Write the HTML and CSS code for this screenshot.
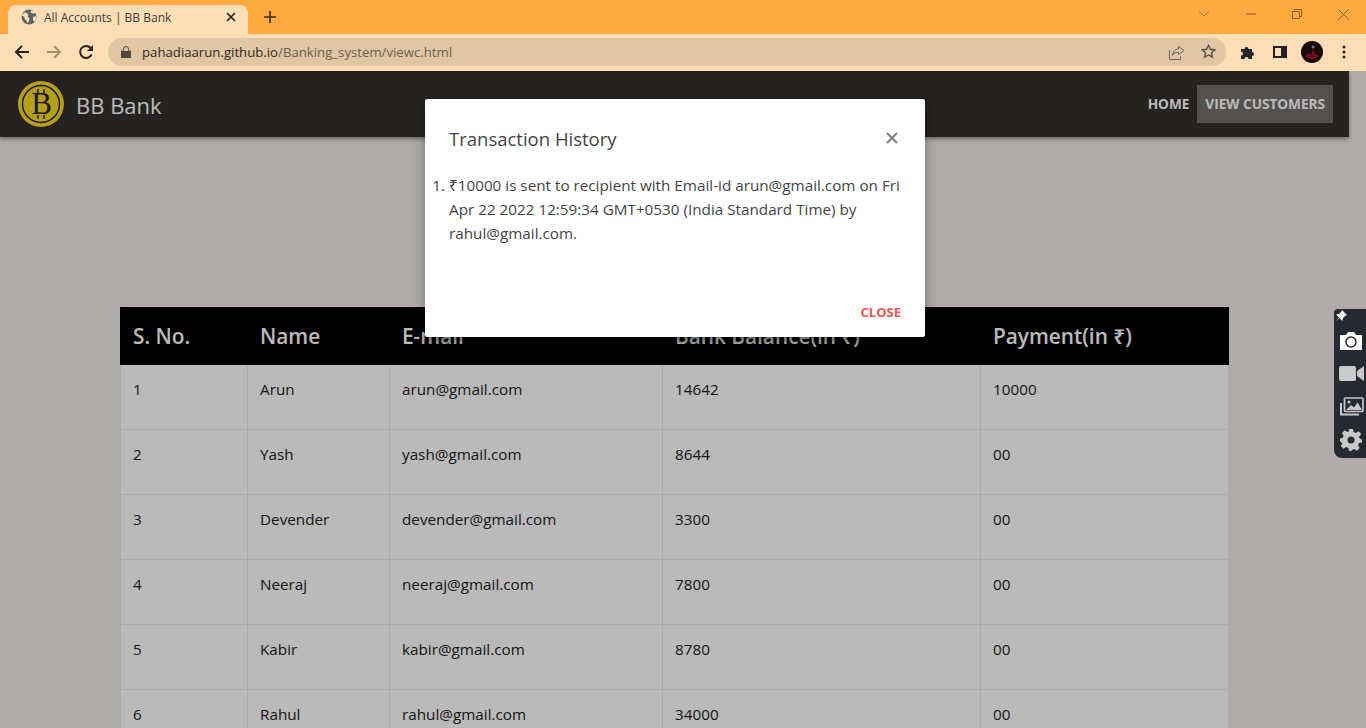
FILE: index.html

```html
<!DOCTYPE html>
<html lang="en">
<head>
  <meta charset="UTF-8">
  <meta name="viewport" content="width=device-width, initial-scale=1">
  <title>All Accounts | BB Bank</title>
  <link rel="stylesheet" href="styles.css">
</head>
<body>

  <div class="tabstrip">
    <div class="tab">
      <svg class="globe" width="16" height="16" viewBox="0 0 16 16"><circle cx="8" cy="8" r="7.5" fill="#5f6368"/><path d="M3 3.500l3 .5 1.500 2-1 1.500 2 2-.5 2.500-1.500 2.500-1-3-2-1.500V8L1 6.500zM10 1.500l-.5 2 2 1 3-.5-1.500-2zM12 8l2.800-1 .5 3-2 3-1.300-2z" fill="#fedfb5"/></svg>
      <span class="tab-title">All Accounts | BB Bank</span>
      <svg class="tab-close" width="10" height="10" viewBox="0 0 10 10"><path d="M1 1l8 8M9 1l-8 8" stroke="#26221e" stroke-width="1.700"/></svg>
    </div>
    <svg class="new-tab" width="12" height="12" viewBox="0 0 12 12"><path d="M6 0v12M0 6h12" stroke="#3d2f1c" stroke-width="1.700"/></svg>
    <div class="win-btns">
      <svg width="12" height="8" viewBox="0 0 12 8"><path d="M1 1l5 5 5-5" fill="none" stroke="#a9783a"/></svg>
      <svg width="10" height="2" viewBox="0 0 10 2"><path d="M0 1h10" stroke="#8a5f28"/></svg>
      <svg width="10" height="10" viewBox="0 0 10 10"><path d="M.5 2.500h7v7h-7zM2.500 2.500v-2h7v7h-2" fill="none" stroke="#8a5f28"/></svg>
      <svg width="11" height="11" viewBox="0 0 11 11"><path d="M.5.500l10 10M10.500.500l-10 10" stroke="#8a5f28"/></svg>
    </div>
  </div>

  <div class="toolbar">
    <svg class="nav-icon" width="16" height="16" viewBox="0 0 16 16"><path d="M15 8H2M8 2L2 8l6 6" fill="none" stroke="#26221e" stroke-width="2"/></svg>
    <svg class="nav-icon" width="16" height="16" viewBox="0 0 16 16"><path d="M1 8h13M8 2l6 6-6 6" fill="none" stroke="#a3937e" stroke-width="2"/></svg>
    <svg class="nav-icon" width="16" height="16" viewBox="0 0 16 16"><path d="M13.600 10.500A6 6 0 1 1 12.500 3.800L14 5.500" fill="none" stroke="#26221e" stroke-width="2"/><path d="M15 1v6H9z" fill="#26221e"/></svg>
    <div class="urlbar">
      <svg width="10" height="12" viewBox="0 0 10 12"><path d="M0 5h10v7H0zM2.500 5V3a2.500 2.500 0 0 1 5 0v2" fill="#4f4a42" stroke="#4f4a42" stroke-width=".8" fill-rule="evenodd"/><path d="M3 5V3a2 2 0 0 1 4 0v2z" fill="#e0c6a3"/></svg>
      <span class="url"><span class="url-host">pahadiaarun.github.io</span>/Banking_system/viewc.html</span>
      <svg class="share" width="16" height="16" viewBox="0 0 16 16"><path d="M9.500 2.500l5.500 4-5.500 4V8.300C6 8.300 4.500 9.500 3.500 11.500 3.800 8 6 5 9.500 4.800z" fill="none" stroke="#6b6760"/><path d="M.5 6v9.500h11v-3" fill="none" stroke="#6b6760"/></svg>
      <svg class="star" width="15" height="15" viewBox="0 0 15 15"><path d="M7.500 1.300l1.900 4 4.400.5-3.300 3 .9 4.400-3.900-2.200-3.900 2.200.9-4.400-3.300-3 4.400-.5z" fill="none" stroke="#4f4f52" stroke-width="1.400"/></svg>
    </div>
    <svg class="puzzle" width="16" height="16" viewBox="0 0 16 16"><path d="M1 5h3.500a2 2 0 1 1 4 0H12v3a2 2 0 1 1 0 4v3H8.500a2 2 0 1 0-4 0H1v-3.500a2 2 0 1 0 0-4z" fill="#26272c"/></svg>
    <svg class="panel" width="14" height="12" viewBox="0 0 14 12"><path d="M0 0h14v12H0zM2 2v8h6V2z" fill="#202124" fill-rule="evenodd"/></svg>
    <svg class="avatar" width="22" height="22" viewBox="0 0 22 22"><circle cx="11" cy="11" r="11" fill="#1b0a0c"/><path d="M4 15l3-3 3 2 2-6 3 5 3 2-4 3H8z" fill="#6e0f18"/><circle cx="12" cy="6" r="1.500" fill="#777"/></svg>
    <svg class="menu" width="4" height="14" viewBox="0 0 4 14"><circle cx="2" cy="2" r="1.500" fill="#26221e"/><circle cx="2" cy="7" r="1.500" fill="#26221e"/><circle cx="2" cy="12" r="1.500" fill="#26221e"/></svg>
  </div>

  <div class="page">
    <div class="site">
      <nav class="navbar">
        <svg class="logo" width="46" height="46" viewBox="0 0 46 46">
          <circle cx="23" cy="23" r="23" fill="#f8dc26"/>
          <circle cx="23" cy="23" r="18.500" fill="none" stroke="#272220" stroke-width="1.500"/>
          <text class="logo-b" x="23.500" y="33" text-anchor="middle">B</text>
          <path d="M20 8v4M26 8v4M20 34v4M26 34v4" stroke="#272220" stroke-width="1.500"/>
        </svg>
        <span class="brand">BB Bank</span>
        <div class="nav-links">
          <a class="nav-link">HOME</a>
          <a class="nav-link active">VIEW CUSTOMERS</a>
        </div>
      </nav>

      <table class="accounts">
        <colgroup>
          <col class="col-no"><col class="col-name"><col class="col-mail"><col class="col-bal"><col class="col-pay">
        </colgroup>
        <thead>
          <tr><th>S. No.</th><th>Name</th><th>E-mail</th><th>Bank Balance(in ₹)</th><th>Payment(in ₹)</th></tr>
        </thead>
        <tbody>
          <tr><td>1</td><td>Arun</td><td>arun@gmail.com</td><td>14642</td><td>10000</td></tr>
          <tr><td>2</td><td>Yash</td><td>yash@gmail.com</td><td>8644</td><td>00</td></tr>
          <tr><td>3</td><td>Devender</td><td>devender@gmail.com</td><td>3300</td><td>00</td></tr>
          <tr><td>4</td><td>Neeraj</td><td>neeraj@gmail.com</td><td>7800</td><td>00</td></tr>
          <tr><td>5</td><td>Kabir</td><td>kabir@gmail.com</td><td>8780</td><td>00</td></tr>
          <tr><td>6</td><td>Rahul</td><td>rahul@gmail.com</td><td>34000</td><td>00</td></tr>
        </tbody>
      </table>
    </div>

    <div class="overlay"></div>

    <div class="modal">
      <div class="modal-head">
        <h4>Transaction History</h4>
        <svg class="modal-x" width="12" height="12" viewBox="0 0 12 12"><path d="M1 1l10 10M11 1L1 11" stroke="#808080" stroke-width="2.200"/></svg>
      </div>
      <ol class="modal-list">
        <li>₹10000 is sent to recipient with Email-id arun@gmail.com on Fri Apr 22 2022 12:59:34 GMT+0530 (India Standard Time) by rahul@gmail.com.</li>
      </ol>
      <div class="modal-foot"><a class="close-link">CLOSE</a></div>
    </div>

    <div class="capture">
      <svg class="pin" width="12" height="12" viewBox="0 0 12 12"><path d="M7 0l5 5-1.500.5L8 8l-.5 3-3-3L1 11.500 4 7.500 1 4.500 4 4l2.500-2.500z" fill="#fff"/></svg>
      <div class="tool"><svg width="24" height="20" viewBox="0 0 24 20"><path d="M1 4h6l2-3h6l2 3h6v15H1z" fill="#fff"/><circle cx="12" cy="11" r="5" fill="none" stroke="#262a30" stroke-width="1.500"/></svg></div>
      <div class="tool"><svg width="25" height="17" viewBox="0 0 25 17"><rect x="0" y="1" width="17" height="15" rx="2" fill="#c9c9c9"/><path d="M18 6l7-5v15l-7-5z" fill="#c9c9c9"/></svg></div>
      <div class="tool"><svg width="25" height="20" viewBox="0 0 25 20"><path d="M2 6v11.500h18" fill="none" stroke="#c9c9c9" stroke-width="2"/><rect x="5.500" y="1" width="18.500" height="13.500" rx="1" fill="none" stroke="#c9c9c9" stroke-width="1.700"/><path d="M7 13l5-5 3 2.500 3.500-5L23 13z" fill="#c9c9c9"/><circle cx="10" cy="5" r="1.500" fill="#c9c9c9"/></svg></div>
      <div class="tool"><svg width="22" height="22" viewBox="0 0 22 22"><path d="M9 0h4l.6 3 2.300 1 2.600-1.700 2.800 2.800L19 7.700l1 2.300 2 .6v3l-3 .4-1 2.300 1.700 2.600-2.800 2.800-2.600-1.700-2.300 1-.6 1H9l-.6-3-2.300-1-2.600 1.700-2.800-2.800L2.400 15 1.400 13 0 12.600v-3l2.600-.6 1-2.300L2 4.100 4.800 1.300l2.600 1.700L9 2.300z" fill="#c9c9c9"/><circle cx="11" cy="11" r="3.500" fill="#262a30"/></svg></div>
    </div>
  </div>

</body>
</html>
```

FILE: styles.css

```css
* {
  box-sizing: border-box;
}
html, body {
  margin: 0;
  height: 728px;
  overflow: hidden;
}
body {
  font-family: "Open Sans", "Noto Sans", sans-serif;
  display: flex;
  flex-direction: column;
  background-color: #f1eae6;
}

/* browser chrome */
.tabstrip {
  height: 34px;
  background-color: #ffa940;
  display: flex;
  align-items: flex-end;
  padding-left: 8px;
}
.tab {
  width: 240px;
  height: 29px;
  background-color: #fedfb5;
  border-radius: 8px 8px 0 0;
  display: flex;
  align-items: center;
  padding: 0 12px 5px 13px;
}
.tab-title {
  font-size: 12px;
  color: #3c3a36;
  margin-left: 7px;
  flex: 1;
}
.new-tab {
  margin: 0 0 11px 16px;
}
.win-btns {
  margin-left: auto;
  display: flex;
  align-items: center;
  height: 28px;
  align-self: flex-start;
  gap: 36px;
  padding-right: 17px;
}
.toolbar {
  height: 37px;
  background-color: #fedfb5;
  display: flex;
  align-items: center;
  padding: 0 13px 2px 14px;
}
.nav-icon {
  margin-right: 16px;
}
.urlbar {
  margin-left: -2px;
  width: 1118px;
  height: 28px;
  border-radius: 14px;
  background-color: #e0c6a3;
  display: flex;
  align-items: center;
  padding-left: 13px;
}
.url {
  font-size: 13.2px;
  color: #6b5f4f;
  margin-left: 11px;
  flex: 1;
}
.url-host {
  color: #2d2a26;
}
.share {
  margin-right: 16px;
}
.star {
  margin-right: 10px;
}
.puzzle {
  margin-left: 14px;
}
.panel {
  margin-left: 17px;
}
.avatar {
  margin-left: 14px;
}
.menu {
  margin-left: 19px;
}

/* page */
.page {
  flex: 1;
  position: relative;
  overflow: hidden;
}
.site {
  width: 1349px;
}
.navbar {
  height: 66px;
  background-color: #352f2c;
  box-shadow: 0 2px 4px rgba(0, 0, 0, 0.4);
  display: flex;
  align-items: center;
  padding: 0 16px 0 18px;
}
.logo {
  flex: none;
}
.logo-b {
  font-family: "Liberation Serif", serif;
  font-size: 31px;
  fill: #272220;
}
.brand {
  font-size: 22px;
  color: #fff;
  margin-left: 12px;
  padding-top: 1px;
}
.nav-links {
  margin-left: auto;
  display: flex;
  align-items: center;
}
.nav-link {
  font-size: 13.6px;
  font-weight: 700;
  color: #fff;
  height: 38px;
  line-height: 38px;
  padding: 0 8px;
}
.nav-link.active {
  background-color: rgba(255, 255, 255, 0.31);
}
.accounts {
  width: 1109px;
  margin: 170px 0 0 120px;
  border-collapse: separate;
  border-spacing: 0;
  table-layout: fixed;
  background-color: #fff;
  font-size: 15.25px;
  color: #222;
}
.col-no { width: 128px; }
.col-name { width: 142px; }
.col-mail { width: 273px; }
.col-bal { width: 318px; }
.col-pay { width: 248px; }
.accounts th {
  background-color: #000;
  color: #fff;
  font-size: 20.8px;
  font-weight: 600;
  text-align: left;
  height: 58px;
  padding: 0 12px;
}
.accounts th:first-child {
  padding-left: 13px;
}
.accounts td {
  height: 65px;
  padding: 0 12px 17px;
  border-right: 1px solid #ebebeb;
  border-bottom: 1px solid #ebebeb;
}
.accounts td:first-child {
  border-left: 1px solid #ebebeb;
}

/* modal */
.overlay {
  position: absolute;
  inset: 0;
  background-color: rgba(0, 0, 0, 0.27);
}
.modal {
  position: absolute;
  left: 425px;
  top: 28px;
  width: 500px;
  height: 238px;
  background-color: #fff;
  border-radius: 2px;
  box-shadow: 0 8px 10px 1px rgba(0, 0, 0, 0.14), 0 3px 14px 2px rgba(0, 0, 0, 0.12), 0 5px 5px -3px rgba(0, 0, 0, 0.3);
  display: flex;
  flex-direction: column;
  color: #444;
}
.modal-head {
  display: flex;
  justify-content: space-between;
  align-items: center;
  padding: 26px 27px 0 24px;
}
.modal-head h4 {
  margin: 0;
  font-size: 18.5px;
  font-weight: 400;
  line-height: 28px;
}
.modal-x {
  margin-top: -2px;
}
.modal-list {
  margin: 20px 0 0;
  padding: 0 24px;
  font-size: 15.25px;
  line-height: 24.2px;
}
.modal-foot {
  margin-top: auto;
  text-align: right;
  padding: 0 24px 15px;
}
.close-link {
  font-size: 13px;
  font-weight: 700;
  color: #ff5252;
}

/* screenshot extension */
.capture {
  position: absolute;
  right: 0;
  top: 238px;
  width: 32px;
  height: 149px;
  background-color: #262a30;
  border-radius: 4px 0 0 8px;
  display: flex;
  flex-direction: column;
  align-items: center;
  padding: 15px 0 0 2px;
}
.tool {
  height: 33px;
  flex: none;
  display: flex;
  align-items: center;
}
.pin {
  position: absolute;
  left: 1px;
  top: 1px;
}
```
